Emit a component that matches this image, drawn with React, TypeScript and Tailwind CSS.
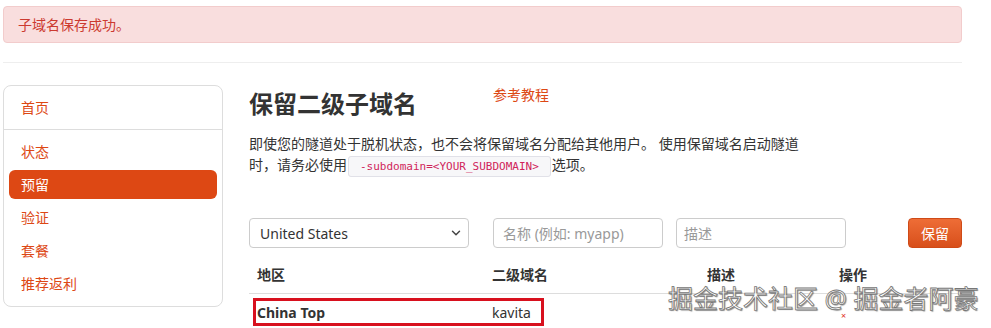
import { ChevronDown } from "lucide-react";

const navItems = ["状态", "预留", "验证", "套餐", "推荐返利"];

function Sidebar() {
  return (
    <div className="w-[220px] shrink-0 self-start rounded-lg border border-[#dddddd] bg-white text-[14px] text-[#dd4814]">
      <div className="h-[44px] px-[17px] leading-[44px] border-b border-[#dddddd]">首页</div>
      <div className="flex flex-col gap-[4px] px-[5px] pt-[7px] pb-[8px]">
        {navItems.map((item) => (
          <div
            key={item}
            className={
              item === "预留"
                ? "h-[29px] rounded-md bg-[#dd4814] px-3 leading-[29px] text-white"
                : "h-[29px] px-3 leading-[29px]"
            }
          >
            {item}
          </div>
        ))}
      </div>
    </div>
  );
}

function ReserveForm() {
  return (
    <div className="mt-[41px] flex h-[30px] items-center text-[14px]">
      <div className="relative w-[220px] h-[30px]">
        <select
          className="h-full w-full appearance-none rounded border border-[#cccccc] bg-white pl-[10px] text-[#333333] outline-none"
          defaultValue="us"
        >
          <option value="us">United States</option>
        </select>
        <ChevronDown className="pointer-events-none absolute right-[6px] top-[8px] h-[14px] w-[14px] text-[#444]" strokeWidth={2.5} />
      </div>
      <input
        className="ml-[24px] h-[30px] w-[170px] rounded border border-[#cccccc] px-[9px] text-[#333] placeholder:text-[#999999] outline-none"
        placeholder="名称 (例如: myapp)"
      />
      <input
        className="ml-[13px] h-[30px] w-[170px] rounded border border-[#cccccc] px-[7px] text-[#333] placeholder:text-[#999999] outline-none"
        placeholder="描述"
      />
      <button className="ml-auto h-[30px] w-[54px] rounded-[4px] border border-[#cf4a17] bg-linear-to-b from-[#ee6d36] to-[#d84f1a] text-white">
        保留
      </button>
    </div>
  );
}

function DomainTable() {
  return (
    <div className="relative mt-[17px] text-[14px] text-[#333]">
      <div className="flex border-b border-[#dddddd] pb-[8px] font-bold leading-[20px]">
        <div className="w-[235px] pl-2">地区</div>
        <div className="w-[215px] pl-2">二级域名</div>
        <div className="w-[132px] pl-2">描述</div>
        <div className="pl-2">操作</div>
      </div>
      <div className="flex pt-[9px] leading-[20px]">
        <div className="w-[235px] pl-2 font-bold">China Top</div>
        <div className="w-[215px] pl-2">kavita</div>
        <div className="w-[132px] pl-2"></div>
        <div className="pl-[10px] text-[9px] leading-[26px] text-[#e0301e]">×</div>
      </div>
      {/* annotation box */}
      <div className="pointer-events-none absolute left-[4px] top-[33px] h-[28px] w-[291px] border-[3px] border-[#d8101e]" />
    </div>
  );
}

export default function App() {
  return (
    <div
      className="relative h-[328px] w-[991px] overflow-hidden bg-white"
      style={{ fontFamily: '"Noto Sans", "Noto Sans CJK SC", sans-serif' }}
    >
      <div className="ml-[3px] w-[959px] pt-[6px]">
        <div className="h-[37px] rounded border border-[#f2cccc] bg-[#f9dede] pl-[14px] text-[14px] leading-[35px] text-[#cc3a30]">
          子域名保存成功。
        </div>
        <div className="mt-[19px] border-t border-[#eeeeee]" />

        <div className="mt-[22px] flex">
          <Sidebar />
          <div className="ml-[26px] flex-1">
            <div className="flex items-start">
              <h1 className="w-[244px] pt-[4px] text-[24px] font-bold leading-[30px] text-[#333]">保留二级子域名</h1>
              <a className="text-[14px] leading-[20px] text-[#dd4814]">参考教程</a>
            </div>
            <p className="mt-[14px] w-[556px] text-[14px] leading-[21px] text-[#333]">
              即使您的隧道处于脱机状态，也不会将保留域名分配给其他用户。 使用保留域名启动隧道时，请务必使用
              <code
                className="mx-[1px] rounded-[3px] border border-[#e1e1e8] bg-[#f7f7f9] px-[11px] py-[3px] text-[11px] text-[#d0245a]"
                style={{ fontFamily: '"DejaVu Sans Mono", monospace' }}
              >
                -subdomain=&lt;YOUR_SUBDOMAIN&gt;
              </code>
              选项。
            </p>
            <ReserveForm />
            <DomainTable />
          </div>
        </div>
      </div>

      {/* watermark */}
      <div className="pointer-events-none absolute left-[668px] top-[283px] whitespace-nowrap text-[25px] leading-[30px] text-white [-webkit-text-stroke:0.8px_#777] [text-shadow:1px_1px_1px_rgba(0,0,0,0.45)]">
        掘金技术社区 @ 掘金者阿豪
      </div>
    </div>
  );
}
